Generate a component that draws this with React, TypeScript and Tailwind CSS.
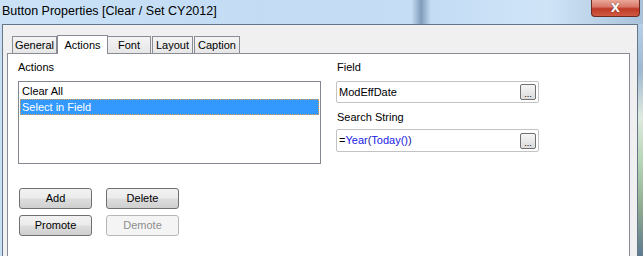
import React from 'react'

const ui = { fontFamily: '"Liberation Sans", Arial, sans-serif' }

function Tab({ label, active, className }: { label: string; active?: boolean; className: string }) {
  return active ? (
    <div className={`relative z-10 -mb-px h-[19px] bg-white border border-b-0 border-[#898c95] flex items-start justify-center pt-[1px] text-[11px] text-black ${className}`}>
      {label}
    </div>
  ) : (
    <div className={`h-[17px] bg-[linear-gradient(180deg,#f4f4f4,#e6e6e6)] border-t border-[#898c95] flex items-center justify-center text-[11px] text-black ${className}`}>
      {label}
    </div>
  )
}

function WinButton({ label, disabled }: { label: string; disabled?: boolean }) {
  return (
    <div
      className={`h-[21px] w-[73px] rounded-[3px] border flex items-center justify-center text-[11px] ${
        disabled
          ? 'border-[#b5b8ba] bg-[#f4f4f4] text-[#8d8d8d]'
          : 'border-[#707070] bg-[linear-gradient(180deg,#f2f2f2_0%,#ebebeb_48%,#dddddd_52%,#cfcfcf_100%)] text-black'
      }`}
    >
      {label}
    </div>
  )
}

function Ellipsis() {
  return (
    <div className="h-[16px] w-[16px] rounded-[2px] border border-[#707070] bg-[linear-gradient(180deg,#f5f5f5,#dcdcdc)] flex items-end justify-center text-[9px] leading-[10px] text-black">
      ...
    </div>
  )
}

export default function App() {
  return (
    <div
      className="w-[643px] h-[256px] overflow-hidden flex flex-col bg-[linear-gradient(90deg,#cbe2f7_0%,#c3dcf4_40%,#c6def5_64%,#7f9cb9_65.5%,#c4ddf5_67%,#cfe4f7_85%,#a9c2da_100%)]"
      style={ui}
    >
      {/* Title bar */}
      <div className="h-[24px] flex items-start justify-between shrink-0">
        <div className="pl-[2px] pt-[3px] text-[12.5px] leading-[16px] text-black">
          Button Properties [Clear / Set CY2012]
        </div>
        <div className="mr-[3px] h-[17px] w-[49px] rounded-b-[4px] border border-t-0 border-[#6b2a22] bg-[linear-gradient(180deg,#eaa797_0%,#d9786a_42%,#bf3a27_55%,#cf5a42_100%)] flex items-center justify-center">
          <span
            className="text-[12px] font-bold leading-none text-white [text-shadow:0_0_1px_#4a1a14]"
            style={{ fontFamily: '"DejaVu Sans", sans-serif' }}
          >
            X
          </span>
        </div>
      </div>

      <div className="flex flex-1">
        <div className="w-[2px] bg-[#c9def2]" />
        {/* Client area */}
        <div className="w-[636px] bg-[#f0f0f0] border-l border-t border-r border-[#63768a] pt-[10px] pl-[4px] pr-[7px] flex flex-col">
          {/* Tabs */}
          <div className="h-[18px] flex items-end pl-[5px]">
            <Tab label="General" className="w-[45px] border-l border-r" />
            <Tab label="Actions" active className="w-[51px]" />
            <Tab label="Font" className="w-[43px] border-r" />
            <Tab label="Layout" className="w-[41px] ml-px border-l border-r" />
            <Tab label="Caption" className="w-[46px] ml-px border-l border-r" />
          </div>

          {/* Tab page */}
          <div className="flex-1 bg-white border-l border-t border-r border-[#898c95] flex pl-[10px] pt-[7px]">
            {/* Left column */}
            <div className="w-[303px] flex flex-col">
              <div className="h-[13px] text-[11px] leading-[13px] text-black">Actions</div>
              <div className="mt-[7px] h-[83px] border border-[#828790] bg-white pt-px px-px flex flex-col">
                <div className="h-[16px] pl-[2px] flex items-center text-[11px] text-black">Clear All</div>
                <div className="h-[16px] pl-[1px] flex items-center text-[11px] text-white bg-[#3399ff] border border-dotted border-[#e8a050]">
                  Select in Field
                </div>
              </div>
              <div className="mt-[24px] ml-px grid grid-cols-[73px_73px] gap-x-[14px] gap-y-[6px]">
                <WinButton label="Add" />
                <WinButton label="Delete" />
                <WinButton label="Promote" />
                <WinButton label="Demote" disabled />
              </div>
            </div>

            {/* Right column */}
            <div className="ml-[15px] w-[203px] flex flex-col">
              <div className="h-[13px] pl-px text-[11px] leading-[13px] text-black">Field</div>
              <div className="mt-[7px] h-[22px] rounded-[2px] border border-[#c3c3c3] bg-white flex items-center justify-between pl-[2px] pr-[2px]">
                <span className="text-[11px] text-black">ModEffDate</span>
                <Ellipsis />
              </div>
              <div className="mt-[8px] h-[13px] pl-px text-[11px] leading-[13px] text-black">Search String</div>
              <div className="mt-[5px] h-[23px] rounded-[2px] border border-[#c3c3c3] bg-white flex items-center justify-between pl-[2px] pr-[2px]">
                <span className="text-[11px] text-black">
                  =<span className="text-[#1a1ae6]">Year</span>
                  <span className="text-[#1a1a8a]">(</span>
                  <span className="text-[#1a1ae6]">Today()</span>
                  <span className="text-[#1a1a8a]">)</span>
                </span>
                <Ellipsis />
              </div>
            </div>
          </div>
        </div>
        <div className="w-[5px] bg-[linear-gradient(180deg,#b7cfe6_0%,#9fb8d0_20%,#dfeadf_40%,#b4d4b4_60%,#8ea98e_80%,#5f7a90_100%)]" />
      </div>
    </div>
  )
}
